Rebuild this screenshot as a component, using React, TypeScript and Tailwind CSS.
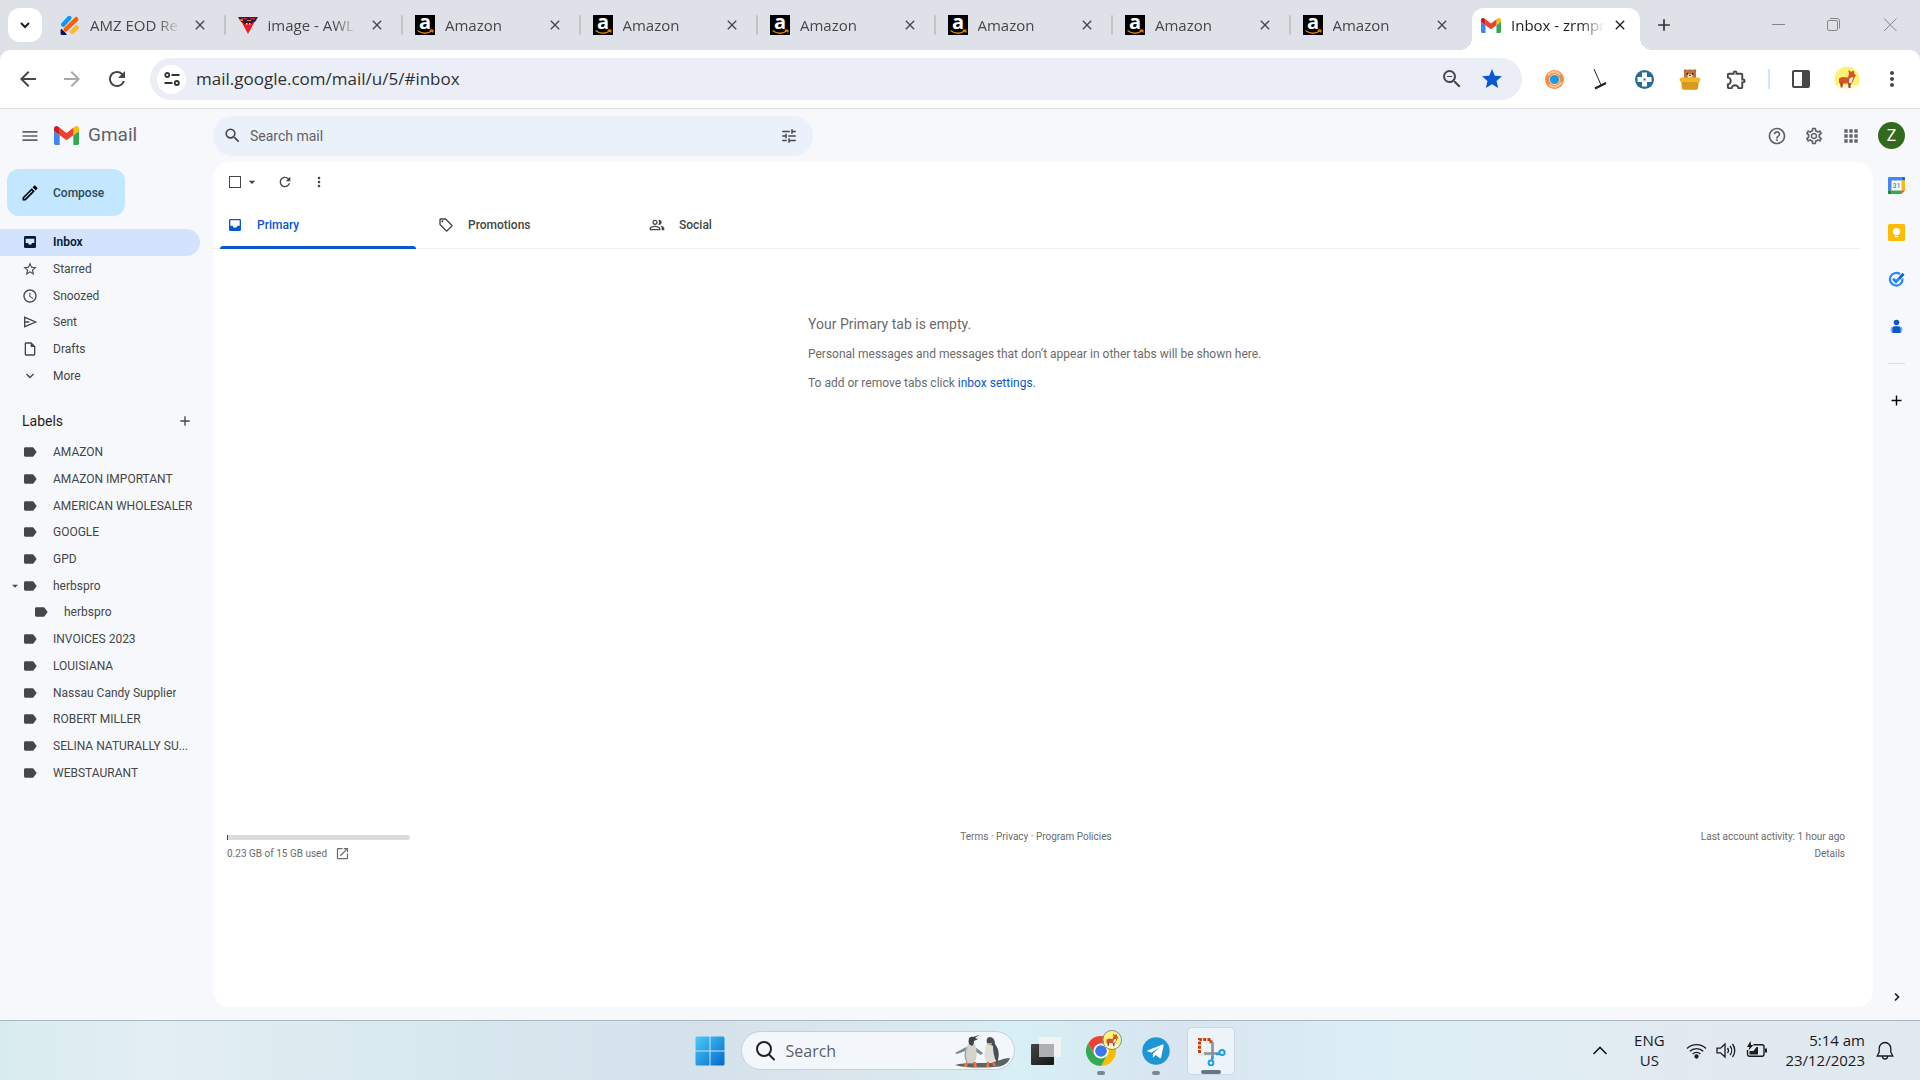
import { ReactNode } from 'react';
import clsx from 'clsx';
import {
  MdAccessTime,
  MdAdd,
  MdApps,
  MdArrowBack,
  MdArrowDropDown,
  MdArrowForward,
  MdClose,
  MdHelpOutline,
  MdLabel,
  MdMenu,
  MdMoreVert,
  MdOpenInNew,
  MdOutlineEdit,
  MdOutlineExtension,
  MdOutlineInsertDriveFile,
  MdOutlineLocalOffer,
  MdOutlinePeopleAlt,
  MdOutlineSettings,
  MdRefresh,
  MdSearch,
  MdStar,
  MdStarBorder,
  MdTune,
  MdZoomOut,
} from 'react-icons/md';

interface BrowserTab {
  title: string;
  icon: ReactNode;
}

const GmailLogo = ({ className }: { className: string }) => (
  <svg className={className} viewBox="52 42 88 66" aria-hidden="true">
    <path fill="#4285f4" d="M58 108h14V74L52 59v43c0 3.32 2.69 6 6 6" />
    <path fill="#34a853" d="M120 108h14c3.32 0 6-2.69 6-6V59l-20 15" />
    <path fill="#fbbc04" d="M120 48v26l20-15v-8c0-7.42-8.47-11.65-14.4-7.2" />
    <path fill="#ea4335" d="M72 74V48l24 18 24-18v26L96 92" />
    <path fill="#c5221f" d="M52 51v8l20 15V48l-5.600-4.200C60.460 39.350 52 43.580 52 51" />
  </svg>
);

const JotformIcon = () => (
  <svg className="size-5" viewBox="0 0 20 20" aria-hidden="true">
    <g strokeLinecap="round" strokeWidth="4.400" fill="none">
      <path stroke="#0a99ff" d="M3.300 9.600 9.300 3" />
      <path stroke="#ff6100" d="M5.600 14.500 16.300 4.200" />
      <path stroke="#ffb629" d="M12.200 16.800 16.600 12.600" />
    </g>
    <path fill="#0a1551" d="M.6 14.800v3.900c0 .7.500 1.200 1.200 1.200H6c.8 0 .9-.7.400-1.200l-4.300-4.300c-.7-.6-1.500-.3-1.500.4" />
  </svg>
);

const AwlIcon = () => (
  <svg className="size-5" viewBox="0 0 20 20" aria-hidden="true">
    <path fill="#25204f" d="M0 2h20l-3 5H3z" />
    <path fill="#b0243f" d="M3 3h6v1.500H3zM12 3h5v1.500h-5z" />
    <path fill="#f08a24" d="M2 4.500h3V6H2zM9 5h4v1H9z" />
    <path fill="#ee1c25" d="M3.500 7h13L10 19z" />
    <path fill="#3a1133" d="M5 7h10l-1.500 2h-7z" />
    <path fill="#f7d9d9" d="M8 8h1.500v1.500H8zM11 8h1.500v1.500H11z" />
  </svg>
);

const AmazonIcon = () => (
  <svg className="size-5" viewBox="0 0 20 20" aria-hidden="true">
    <path d="M0 0h20v20H0z" />
    <text x="10" y="14" textAnchor="middle" fill="#fff" fontSize="20" fontWeight="700" fontFamily="Open Sans, sans-serif">
      a
    </text>
    <path d="M2.500 15.500c4.500 3.400 10 3.300 14.500.4M14.800 15.300h3v2.200" fill="none" stroke="#d9830f" strokeWidth="1.400" />
  </svg>
);

const CorgiAvatar = ({ className }: { className: string }) => (
  <svg className={className} viewBox="0 0 26 26" aria-hidden="true">
    <circle cx="13" cy="13" r="12.500" fill="#fff176" />
    <path fill="#fffde7" d="M2 19h22a12.500 12.500 0 0 1-22 0" />
    <path fill="#d4552a" d="M5 12.500 8 11l6 .5 1-4-.8-3.500 2.800 1.800 3-1 .3 3L22 9.500l-1.500 2-1.500 4-1.500 2H7L5 17z" />
    <path fill="#fff" d="M15.500 12.500 19 11l-1 5-3 2z" />
    <path fill="#b4431f" d="M6 16.500h3l-.5 5H6.700zM14 17h3l-.5 5h-2z" />
  </svg>
);

const InboxIcon = () => (
  <svg className="size-4" viewBox="0 0 24 24" fill="currentColor" aria-hidden="true">
    <path fillRule="evenodd" d="M5 3h14a2 2 0 0 1 2 2v14a2 2 0 0 1-2 2H5a2 2 0 0 1-2-2V5c0-1.100.9-2 2-2m0 2v8h3.500a3.500 3 0 0 0 7 0H19V5z" />
  </svg>
);

const InboxFilledIcon = () => (
  <svg className="size-4" viewBox="0 0 24 24" fill="currentColor" aria-hidden="true">
    <path fillRule="evenodd" d="M5 3h14a2 2 0 0 1 2 2v14a2 2 0 0 1-2 2H5a2 2 0 0 1-2-2V5c0-1.100.9-2 2-2m.5 4v6.500H9a3 2.500 0 0 0 6 0h3.500V7z" />
  </svg>
);

const SendIcon = () => (
  <svg className="size-4" viewBox="0 0 24 24" fill="none" stroke="currentColor" strokeWidth="2" aria-hidden="true">
    <path d="M4 5v14l16.500-7zM4 12h7" />
  </svg>
);

const tabs: BrowserTab[] = [
  { title: 'AMZ EOD Report', icon: <JotformIcon /> },
  { title: 'image - AWL Wholesale', icon: <AwlIcon /> },
  { title: 'Amazon', icon: <AmazonIcon /> },
  { title: 'Amazon', icon: <AmazonIcon /> },
  { title: 'Amazon', icon: <AmazonIcon /> },
  { title: 'Amazon', icon: <AmazonIcon /> },
  { title: 'Amazon', icon: <AmazonIcon /> },
  { title: 'Amazon', icon: <AmazonIcon /> },
];

const folders = [
  { name: 'Inbox', icon: <InboxFilledIcon />, active: true },
  { name: 'Starred', icon: <MdStarBorder className="size-4" /> },
  { name: 'Snoozed', icon: <MdAccessTime className="size-4" /> },
  { name: 'Sent', icon: <SendIcon /> },
  { name: 'Drafts', icon: <MdOutlineInsertDriveFile className="size-4" /> },
  {
    name: 'More',
    icon: (
      <svg className="size-4" viewBox="0 0 16 16" fill="none" stroke="currentColor" strokeWidth="1.300">
        <path d="m4.500 6 3.500 3.500L11.500 6" />
      </svg>
    ),
  },
];

const labels = [
  { name: 'AMAZON' },
  { name: 'AMAZON IMPORTANT' },
  { name: 'AMERICAN WHOLESALER' },
  { name: 'GOOGLE' },
  { name: 'GPD' },
  { name: 'herbspro', open: true },
  { name: 'herbspro', nested: true },
  { name: 'INVOICES 2023' },
  { name: 'LOUISIANA' },
  { name: 'Nassau Candy Supplier' },
  { name: 'ROBERT MILLER' },
  { name: 'SELINA NATURALLY SU...' },
  { name: 'WEBSTAURANT' },
];

const fade = '[mask-image:linear-gradient(to_right,black_75%,transparent)]';

const TabStrip = () => (
  <div className="flex h-[50px] items-end pl-2 text-[15px] text-[#45474a]">
    <button aria-label="Search tabs" className="mb-2 mr-[6px] flex size-[34px] shrink-0 items-center justify-center rounded-xl bg-white text-[#1f1f1f]">
      <svg className="size-3" viewBox="0 0 12 12" fill="none" stroke="currentColor" strokeWidth="2">
        <path d="m2 4 4 4 4-4" />
      </svg>
    </button>
    <div className="flex min-w-0 max-w-[1592px] grow items-end">
      {tabs.map((tab, i) => (
        <div key={i} className="flex h-[42px] min-w-0 flex-1 items-center pb-2 pl-3">
          <span className="shrink-0">{tab.icon}</span>
          <a href="#tab" className={clsx('ml-[10px] min-w-0 flex-1 overflow-hidden whitespace-nowrap', fade)}>
            {tab.title}
          </a>
          <button aria-label="Close tab" className="ml-3 mr-4">
            <MdClose className="size-4" />
          </button>
          <span className={clsx('h-5 w-[2px] shrink-0 rounded', i < tabs.length - 1 && 'bg-[#c4c4c4]')} />
        </div>
      ))}
      <div className="relative ml-1 flex h-[42px] w-[168px] shrink-0 items-center rounded-t-xl bg-white pb-2 pl-[9px] text-[#1f1f1f] before:absolute before:-left-3 before:bottom-0 before:size-3 before:bg-[radial-gradient(circle_at_top_left,transparent_12px,white_12px)] after:absolute after:-right-3 after:bottom-0 after:size-3 after:bg-[radial-gradient(circle_at_top_right,transparent_12px,white_12px)]">
        <GmailLogo className="h-[15px] w-5 shrink-0" />
        <a href="#tab" className={clsx('ml-[10px] min-w-0 flex-1 overflow-hidden whitespace-nowrap', fade)}>
          Inbox - zrmproducts
        </a>
        <button aria-label="Close tab" className="ml-2 mr-3">
          <MdClose className="size-4" />
        </button>
      </div>
    </div>
    <button aria-label="New tab" className="mb-[15px] ml-[14px] text-[#333]">
      <MdAdd className="size-5" />
    </button>
    <div className="mb-[15px] ml-auto flex gap-9 pl-8 pr-5 text-[#85878b]">
      <button aria-label="Minimize">
        <svg className="size-5" viewBox="0 0 20 20" fill="none" stroke="currentColor">
          <path d="M4 9.500h13" />
        </svg>
      </button>
      <button aria-label="Restore">
        <svg className="size-5" viewBox="0 0 20 20" fill="none" stroke="currentColor">
          <rect x="3.500" y="5.500" width="10" height="10" rx="1.500" />
          <path d="M6 3.500h7a2.500 2.500 0 0 1 2.500 2.500v7.500" />
        </svg>
      </button>
      <button aria-label="Close">
        <svg className="size-5" viewBox="0 0 20 20" fill="none" stroke="currentColor">
          <path d="m4 3.500 12.500 12.500M16.500 3.500 4 16" />
        </svg>
      </button>
    </div>
  </div>
);

const AddressBar = () => (
  <div className="flex h-[59px] items-center rounded-t-[10px] border-b border-[#dcdee1] bg-white pl-4 text-[#474747]">
    <button aria-label="Back">
      <MdArrowBack className="size-6" />
    </button>
    <button aria-label="Forward" className="ml-5 text-[#a9a9a9]">
      <MdArrowForward className="size-6" />
    </button>
    <button aria-label="Reload" className="ml-[21px]">
      <MdRefresh className="size-6" />
    </button>
    <div className="ml-[21px] flex h-[42px] min-w-0 grow items-center rounded-full bg-[#ebeef7] pl-[7px] pr-[18px]">
      <button aria-label="Site information" className="flex size-[29px] shrink-0 items-center justify-center rounded-full bg-white">
        <svg className="size-5" viewBox="0 0 20 20" fill="none" stroke="#333" strokeWidth="1.800">
          <circle cx="5.200" cy="6" r="2" />
          <path d="M9.500 6h8M2.500 14h8" />
          <circle cx="14.800" cy="14" r="2" />
        </svg>
      </button>
      <input
        aria-label="Address"
        defaultValue="mail.google.com/mail/u/5/#inbox"
        className="ml-[10px] min-w-0 grow bg-transparent text-[17px] text-[#2f3033] outline-none"
      />
      <button aria-label="Zoom">
        <MdZoomOut className="size-6" />
      </button>
      <button aria-label="Bookmark" className="ml-4 text-[#0b57d0]">
        <MdStar className="size-6" />
      </button>
    </div>
    <div className="flex items-center gap-6 pl-[22px] pr-4">
      <button aria-label="Spiral extension">
        <svg className="size-[21px]" viewBox="0 0 21 21">
          <circle cx="10.500" cy="10.500" r="9.500" fill="#f28a45" />
          <path d="M4 6.500a7.600 7.600 0 0 1 12.500-.5M17.500 13a7.600 7.600 0 0 1-12.500 2.500" fill="none" stroke="#fbc38c" strokeWidth="2" />
          <circle cx="10.500" cy="10.500" r="5.400" fill="#ffd9b8" />
          <circle cx="10.500" cy="10.500" r="4.600" fill="#1e9be0" />
        </svg>
      </button>
      <button aria-label="Hockey extension">
        <svg className="size-[21px]" viewBox="0 0 21 21" fill="none" stroke="#222">
          <path d="m5 0 7 16" strokeWidth="1" />
          <path d="m6 19.500 11-5.500" strokeWidth="2.200" />
        </svg>
      </button>
      <button aria-label="Cross extension">
        <svg className="size-[21px]" viewBox="0 0 21 21">
          <circle cx="10.500" cy="10.500" r="9.500" fill="#266c97" />
          <path fill="#fff" d="M8 3.500h5V8h4.500v5H13v4.500H8V13H3.500V8H8z" />
          <path fill="#266c97" d="M9.500 9.500h2v2h-2z" />
        </svg>
      </button>
      <button aria-label="Honey extension">
        <svg className="size-[22px]" viewBox="0 0 22 22">
          <circle cx="6.500" cy="3" r="1.800" fill="#a8662e" />
          <circle cx="15.500" cy="3" r="1.800" fill="#a8662e" />
          <path fill="#b9753a" d="M5 10V5.500C5 2.500 8 1.500 11 1.500s6 1 6 4V10z" />
          <ellipse cx="11" cy="8" rx="2.600" ry="2" fill="#f7e3c8" />
          <path fill="#222" d="M7.500 5h1.500v1.500H7.500zM13 5h1.500v1.500H13zM10.200 6.800h1.600v1.200h-1.600z" />
          <path fill="#d99a1c" d="M2 12h18l-1 8.500a2 2 0 0 1-1.500 1.300h-13A2 2 0 0 1 3 20.500z" />
          <rect x=".5" y="9.500" width="21" height="4.500" rx="2.200" fill="#f0b72d" />
        </svg>
      </button>
      <button aria-label="Extensions">
        <MdOutlineExtension className="size-[23px]" />
      </button>
      <span className="-ml-1 h-5 w-[2px] bg-[#d3e3fd]" />
      <button aria-label="Side panel" className="-ml-1">
        <svg className="size-[22px]" viewBox="0 0 22 22">
          <path fill="currentColor" fillRule="evenodd" d="M4 2h14a2 2 0 0 1 2 2v14a2 2 0 0 1-2 2H4a2 2 0 0 1-2-2V4c0-1.100.9-2 2-2m0 2v14h8V4z" />
        </svg>
      </button>
      <button aria-label="Profile" className="-ml-0.5">
        <CorgiAvatar className="size-[26px]" />
      </button>
      <button aria-label="Browser menu" className="-ml-1">
        <MdMoreVert className="size-6" />
      </button>
    </div>
  </div>
);

const MailHeader = () => (
  <header className="flex h-[53px] items-center text-[#5f6368]">
    <div className="flex w-[213px] shrink-0 items-center pl-5">
      <button aria-label="Main menu">
        <MdMenu className="size-5" />
      </button>
      <a href="#inbox" className="ml-[14px] flex items-center gap-[9px] text-[19px]">
        <GmailLogo className="h-[19px] w-[25px]" />
        Gmail
      </a>
    </div>
    <div className="flex h-10 w-[600px] items-center rounded-full bg-[#eaf1fb] pl-[10px] pr-[15px]">
      <button aria-label="Search" className="text-[#444746]">
        <MdSearch className="size-[19px]" />
      </button>
      <input aria-label="Search mail" placeholder="Search mail" className="ml-2 min-w-0 grow bg-transparent text-sm outline-none placeholder:text-[#5f6368]" />
      <button aria-label="Show search options" className="text-[#444746]">
        <MdTune className="size-[18px]" />
      </button>
    </div>
    <div className="ml-auto flex items-center gap-[17px] pr-[15px]">
      <button aria-label="Support">
        <MdHelpOutline className="size-5" />
      </button>
      <button aria-label="Settings">
        <MdOutlineSettings className="size-5" />
      </button>
      <button aria-label="Google apps">
        <MdApps className="size-5" />
      </button>
      <button aria-label="Google account" className="flex size-[27px] items-center justify-center rounded-full bg-[#33691e] text-base text-white">
        Z
      </button>
    </div>
  </header>
);

const Sidebar = () => (
  <aside className="w-[213px] shrink-0 pt-[7px] text-xs text-[#444746]">
    <button className="ml-[7px] flex h-[47px] w-[118px] items-center rounded-xl bg-[#c2e7ff] pl-[13px] font-medium text-[#2b4a5e]">
      <MdOutlineEdit className="size-5 text-black" />
      <span className="ml-[13px]">Compose</span>
    </button>
    <nav className="mt-[13px] grid h-[160px] auto-rows-fr pr-[13px]">
      {folders.map((folder) => (
        <a
          key={folder.name}
          href={`#${folder.name.toLowerCase()}`}
          className={clsx('flex items-center gap-[15px] rounded-r-full pl-[22px]', folder.active && 'bg-[#d3e3fd] font-semibold text-[#001d35]')}
        >
          {folder.icon}
          {folder.name}
        </a>
      ))}
    </nav>
    <div className="mt-[19px] flex h-[25px] items-center justify-between pl-[22px] pr-[20px]">
      <h2 className="text-sm text-[#1f1f1f]">Labels</h2>
      <button aria-label="Create new label">
        <MdAdd className="size-4" />
      </button>
    </div>
    <nav className="mt-[6px] grid h-[347px] auto-rows-fr pr-[13px]">
      {labels.map((label, i) => (
        <a key={i} href="#label" className={clsx('flex min-w-0 items-center', label.nested ? 'pl-[33px]' : label.open ? 'pl-2' : 'pl-[22px]')}>
          {label.open && <MdArrowDropDown className="size-[14px] shrink-0" />}
          <MdLabel className="size-4 shrink-0" />
          <span className="ml-[15px] truncate">{label.name}</span>
        </a>
      ))}
    </nav>
  </aside>
);

const categories = [
  { name: 'Primary', icon: <InboxIcon />, active: true },
  { name: 'Promotions', icon: <MdOutlineLocalOffer className="size-4" /> },
  { name: 'Social', icon: <MdOutlinePeopleAlt className="size-4" /> },
];

const MailPane = () => (
  <main className="flex min-w-0 grow flex-col rounded-2xl bg-white text-xs text-[#6b6b6b]">
    <div className="flex h-10 items-center pl-4 text-[#444746]">
      <input type="checkbox" aria-label="Select" className="size-3 appearance-none border border-[#444746]" />
      <button aria-label="Select options" className="ml-[3px]">
        <MdArrowDropDown className="size-4" />
      </button>
      <button aria-label="Refresh" className="ml-[17px]">
        <MdRefresh className="size-4" />
      </button>
      <button aria-label="More" className="ml-[18px]">
        <MdMoreVert className="size-4" />
      </button>
    </div>
    <div className="mr-[13px] flex h-[47px] border-b border-[#eceff1]">
      {categories.map((category) => (
        <button
          key={category.name}
          className={clsx('relative flex w-[211px] items-center gap-[14px] pl-[14px] font-medium', category.active ? 'text-[#0b57d0]' : 'text-[#444746]')}
        >
          {category.icon}
          {category.name}
          {category.active && <span className="absolute bottom-[-1px] left-[7px] right-2 h-[3px] rounded-t bg-[#0b57d0]" />}
        </button>
      ))}
    </div>
    <div className="mx-auto mt-[65px] flex w-[470px] flex-col gap-[11px]">
      <h1 className="text-sm leading-5">Your Primary tab is empty.</h1>
      <p className="leading-[18px]">Personal messages and messages that don’t appear in other tabs will be shown here.</p>
      <p className="leading-[18px]">
        To add or remove tabs click{' '}
        <a href="#settings" className="text-[#0b57d0]">
          inbox settings
        </a>
        .
      </p>
    </div>
    <footer className="mb-[145px] mt-auto grid grid-cols-3 pl-[14px] pr-7 text-[10px] leading-[17px]">
      <div>
        <div className="mt-[7px] h-[5px] w-[183px] rounded-r bg-[#dadce0]">
          <div className="h-full w-px bg-[#444746]" />
        </div>
        <div className="mt-[5px] flex items-center gap-2">
          0.23 GB of 15 GB used
          <a href="#storage" aria-label="Manage storage">
            <MdOpenInNew className="size-[15px]" />
          </a>
        </div>
      </div>
      <div className="text-center">
        <a href="#terms">Terms</a> · <a href="#privacy">Privacy</a> · <a href="#policies">Program Policies</a>
      </div>
      <div className="text-right">
        <p>Last account activity: 1 hour ago</p>
        <a href="#details">Details</a>
      </div>
    </footer>
  </main>
);

const SidePanel = () => (
  <aside className="flex w-[47px] shrink-0 flex-col items-center pt-[15px]">
    <div className="flex flex-col gap-[30px]">
      <button aria-label="Calendar">
        <svg className="size-[17px]" viewBox="0 0 17 17">
          <path fill="#fff" d="M3 3h11v11H3z" />
          <path fill="#4285f4" d="M1 0h12.500v3.500h-10v10H0V1a1 1 0 0 1 1-1" />
          <path fill="#1967d2" d="M13.500 0H16a1 1 0 0 1 1 1v2.500h-3.500z" />
          <path fill="#fbbc04" d="M13.500 3.500H17v10h-3.500z" />
          <path fill="#34a853" d="M3.500 13.500h10V17h-10z" />
          <path fill="#188038" d="M0 13.500h3.500V17H1a1 1 0 0 1-1-1z" />
          <path fill="#ea4335" d="M13.500 13.500H17L13.500 17z" />
          <text x="8.500" y="11.300" textAnchor="middle" fontSize="7" fontWeight="600" fill="#4285f4">
            31
          </text>
        </svg>
      </button>
      <button aria-label="Keep">
        <svg className="size-[17px]" viewBox="0 0 17 17">
          <rect width="17" height="17" rx="1.500" fill="#fbbc04" />
          <circle cx="8.500" cy="7.500" r="3.600" fill="#fff" />
          <path fill="#fff" d="M6.800 9.500h3.400v1.800H6.800zM6.800 12h3.400v1.200H6.800z" />
        </svg>
      </button>
      <button aria-label="Tasks">
        <svg className="size-[17px]" viewBox="0 0 17 17" fill="none">
          <path stroke="#2684fc" strokeWidth="2.200" d="M12 3.200A6.300 6.300 0 1 0 14.500 7.500" />
          <path stroke="#2684fc" strokeWidth="2.800" d="m5 7.800 3 3 4-4" />
          <path stroke="#0066da" strokeWidth="2.800" d="m11.500 7.200 4-4.500" />
        </svg>
      </button>
      <button aria-label="Contacts">
        <svg className="size-[17px]" viewBox="0 0 17 17">
          <circle cx="8.500" cy="4.500" r="2.800" fill="#0b57d0" />
          <rect x="2.500" y="8.500" width="12" height="6.500" rx="3" fill="#8ab4f8" />
          <path fill="#0b57d0" d="M4.500 11a2.700 2.700 0 0 1 2.700-2.700h2.600a2.700 2.700 0 0 1 2.700 2.700v4h-8z" />
        </svg>
      </button>
    </div>
    <span className="mt-7 h-px w-[17px] bg-[#dadce0]" />
    <button aria-label="Get add-ons" className="mt-7 text-black">
      <MdAdd className="size-[17px]" />
    </button>
    <button aria-label="Hide side panel" className="mb-[2px] mt-auto">
      <svg className="size-4" viewBox="0 0 16 16" fill="none" stroke="#222" strokeWidth="1.700">
        <path d="m6 4.500 3.500 3.500L6 11.500" />
      </svg>
    </button>
  </aside>
);

const Penguins = () => (
  <svg className="h-[34px] w-14 shrink-0" viewBox="0 0 56 34" aria-hidden="true">
    <path fill="#5b6366" d="M1 31c10-3 28-1 38-3 6-1 10-4 17-4-2 6-8 9-16 9-14 1-29 1-39-2" />
    <path fill="#7b8a92" d="m12 13-11 6 2 1 11-4zM21 13l8 6-2 2-8-5z" />
    <path fill="#d3d3cb" d="M13 12c3-5 8-4 9 1 1 7 1 12-2 16h-7c-3-5-3-11 0-17" />
    <path fill="#8d999f" d="M14 12c-3 6-3 12 0 17-4-3-5-11 0-17" />
    <path fill="#3a4246" d="M15 10c-1-4 0-8 4-7l6-2-4 3 3 1-4 2c0 3-1 4-2 5z" />
    <path fill="#dedfd6" d="M32 12c1-4 7-4 9 1 2 6 1 12-2 16h-6c-3-5-3-11-1-17" />
    <path fill="#454e5a" d="M33 9c-1-3 0-6 3-6s5 3 5 7c4 5 5 12 2 19-3-5-4-12-4-17z" />
    <path fill="#f1a23a" d="M33 9h5v1.500h-5z" />
    <path fill="#e8763a" d="m12 28-3 5h4l1-4zM19 28l1 5h3l-1-5zM33 28l-1 5h3v-5zM38 28l1 4h3l-2-4z" />
  </svg>
);

const Taskbar = () => (
  <footer className="grid h-[60px] grid-cols-[1fr_auto_1fr] items-center border-t border-[#adb7bf] bg-[linear-gradient(to_right,#d8ecee,#e3eef2_8%,#d9eaf0_20%,#d5e1eb_36%,#dbe5ec_44%,#d7eff5_53%,#d8e5f0_61%,#dceef5_72%,#e0edf3_82%,#e2e9f0_88%,#e1e9f0)]">
    <span />
    <div className="flex items-center gap-[7px]">
      <button aria-label="Start" className="flex size-12 items-center justify-center">
        <svg className="size-[30px]" viewBox="0 0 30 30">
          <defs>
            <linearGradient id="win" x1="0" y1="0" x2="1" y2="1">
              <stop stopColor="#4ccbf8" />
              <stop offset="1" stopColor="#0069cc" />
            </linearGradient>
          </defs>
          <path fill="url(#win)" d="M2 .5h12.500v14H.5V2A1.500 1.500 0 0 1 2 .5M15.500.5H28A1.500 1.500 0 0 1 29.500 2v12.500h-14zM.5 15.500h14v14H2A1.500 1.500 0 0 1 .5 28zM15.500 15.500h14V28a1.500 1.500 0 0 1-1.500 1.500H15.500z" />
        </svg>
      </button>
      <label className="flex h-[39px] w-[274px] items-center rounded-full border border-[#c3d0da] bg-[#f3f7fb] pl-3 pr-1">
        <svg className="size-[22px] shrink-0" viewBox="0 0 22 22" fill="none" stroke="#222" strokeWidth="2">
          <circle cx="10" cy="9" r="7" />
          <path d="m15 14.500 5 5" strokeLinecap="round" />
        </svg>
        <input aria-label="Search" placeholder="Search" className="ml-[10px] min-w-0 grow bg-transparent text-base outline-none placeholder:text-[#5c5f63]" />
        <Penguins />
      </label>
      <button aria-label="Task view" className="flex size-12 items-center justify-center">
        <svg className="size-[30px]" viewBox="0 0 30 30">
          <defs>
            <linearGradient id="task" x1="0" y1="0" x2="1" y2="1">
              <stop stopColor="#454545" />
              <stop offset="1" stopColor="#151515" />
            </linearGradient>
          </defs>
          <rect x="0" y="8" width="23" height="21" rx="1" fill="url(#task)" />
          <rect x="8" y="1" width="22" height="20" rx="1" fill="#f1f3f4" />
          <path fill="#aeb1b3" d="M8 8h15v13H9a1 1 0 0 1-1-1z" />
        </svg>
      </button>
      <button aria-label="Chrome" className="relative flex size-12 items-center justify-center">
        <svg className="size-[30px]" viewBox="0 0 30 30">
          <circle cx="15" cy="15" r="15" fill="#fff" />
          <path fill="#ea4335" d="M2 7.500a15 15 0 0 1 26 0H15a7.500 7.500 0 0 0-6.500 11.200z" />
          <path fill="#fbbc04" d="M28 7.500A15 15 0 0 1 15 30l6.500-11.200A7.500 7.500 0 0 0 15 7.500z" />
          <path fill="#34a853" d="M15 30A15 15 0 0 1 2 7.500l6.500 11.300a7.500 7.500 0 0 0 13 0z" />
          <circle cx="15" cy="15" r="7.200" fill="#fff" />
          <circle cx="15" cy="15" r="5.800" fill="#3b78e7" />
        </svg>
        <CorgiAvatar className="absolute right-[3px] top-[3px] size-5 rounded-full border border-[#8d8d70]" />
        <span className="absolute bottom-0 h-1 w-2 rounded-full bg-[#7e878e]" />
      </button>
      <button aria-label="Telegram" className="relative flex size-12 items-center justify-center">
        <svg className="size-7" viewBox="0 0 28 28">
          <circle cx="14" cy="14" r="13.700" fill="#1e96d4" />
          <path fill="#fff" d="M5.500 13.500 20.500 7.500c.8-.3 1.300.2 1.100 1.100l-2.500 11.800c-.2.800-.8 1-1.500.6l-4-3-2 2c-.4.400-.8.300-.8-.3l.2-3.200 6.500-5.900-8 5-3.700-1.100c-.8-.2-.8-.7-.3-1" />
        </svg>
        <span className="absolute bottom-0 h-1 w-2 rounded-full bg-[#7e878e]" />
      </button>
      <button aria-label="Snipping Tool" className="relative flex size-12 items-center justify-center rounded-[5px] border border-[#cbd8e2] bg-[#ecf3f9]">
        <svg className="size-[30px]" viewBox="0 0 30 30" fill="none">
          <path d="M3.500 17V3.500H15V8" stroke="#d83b01" strokeWidth="3" strokeDasharray="3 1.300" />
          <path d="M5 19h13" stroke="#d4dade" strokeWidth="1" />
          <path d="M16.500 6v17M8 17.500h16" stroke="#8a9299" strokeWidth="2.600" />
          <circle cx="26" cy="16.500" r="2.600" stroke="#1d9be8" strokeWidth="2" />
          <circle cx="15" cy="27" r="2.400" stroke="#1d9be8" strokeWidth="2" />
          <path d="m20 18.500 4-1M16.500 20l-.5 4" stroke="#1d9be8" strokeWidth="2" />
        </svg>
        <span className="absolute bottom-0 h-1 w-5 rounded-full bg-[#60778a]" />
      </button>
    </div>
    <div className="flex items-center justify-end pr-[25px] text-[15px] leading-5 text-[#1b1b1b]">
      <button aria-label="Hidden icons">
        <svg className="size-4" viewBox="0 0 16 16" fill="none" stroke="currentColor" strokeWidth="1.700">
          <path d="m1.500 11 6.500-6.500L14.500 11" />
        </svg>
      </button>
      <button className="mb-0.5 ml-6 w-[34px] text-center">
        ENG
        <br />
        US
      </button>
      <button aria-label="Network, volume and battery" className="ml-5 flex items-center gap-[9px]">
        <svg className="size-[21px]" viewBox="0 0 21 21" fill="none" stroke="currentColor" strokeWidth="1.300">
          <path d="M1 8.500a13.500 13.500 0 0 1 19 0M3.800 11.300a9.500 9.500 0 0 1 13.400 0M6.600 14a5.600 5.600 0 0 1 7.800 0" />
          <circle cx="10.500" cy="16.500" r="1.500" fill="currentColor" />
        </svg>
        <svg className="size-[21px]" viewBox="0 0 21 21" fill="none" stroke="currentColor" strokeWidth="1.300">
          <path d="M1 8.200h3.500L9 4v13l-4.500-4.200H1zM11.500 8a4 4 0 0 1 0 5M14 6a7 7 0 0 1 0 9M16.500 4a10.500 10.500 0 0 1 0 13" />
        </svg>
        <svg className="size-[21px]" viewBox="0 0 21 21" fill="none" stroke="currentColor" strokeWidth="1.400">
          <path d="M7.500 4.700H16a2 2 0 0 1 2 2v7.600a2 2 0 0 1-2 2H3.500a2 2 0 0 1-2-2V10" />
          <path fill="currentColor" stroke="none" d="M19 8.500h2v4h-2zM3.500 14.500V11h4l3-4h1.500v7.500zM4.500 1 1 7h2.500L2.500 10.500 7.500 5H5z" />
        </svg>
      </button>
      <time className="mb-0.5 ml-[18px] text-right">
        5:14 am
        <br />
        23/12/2023
      </time>
      <button aria-label="Notifications" className="ml-[10px]">
        <svg className="size-5" viewBox="0 0 20 20" fill="none" stroke="currentColor" strokeWidth="1.300">
          <path d="M10 1.500A5.800 5.800 0 0 0 4.200 7.300V11l-2 4h15.600l-2-4V7.300A5.800 5.800 0 0 0 10 1.500M7.500 15.500a2.500 2.500 0 0 0 5 0" />
        </svg>
      </button>
    </div>
  </footer>
);

const App = () => (
  <div className="flex min-h-screen flex-col bg-[#dee1e8] font-['Open_Sans','Noto_Sans',sans-serif]">
    <TabStrip />
    <AddressBar />
    <div className="flex grow flex-col bg-[#f6f8fc] pb-[13px] font-[Roboto,sans-serif]">
      <MailHeader />
      <div className="flex grow">
        <Sidebar />
        <MailPane />
        <SidePanel />
      </div>
    </div>
    <Taskbar />
  </div>
);

export default App;
